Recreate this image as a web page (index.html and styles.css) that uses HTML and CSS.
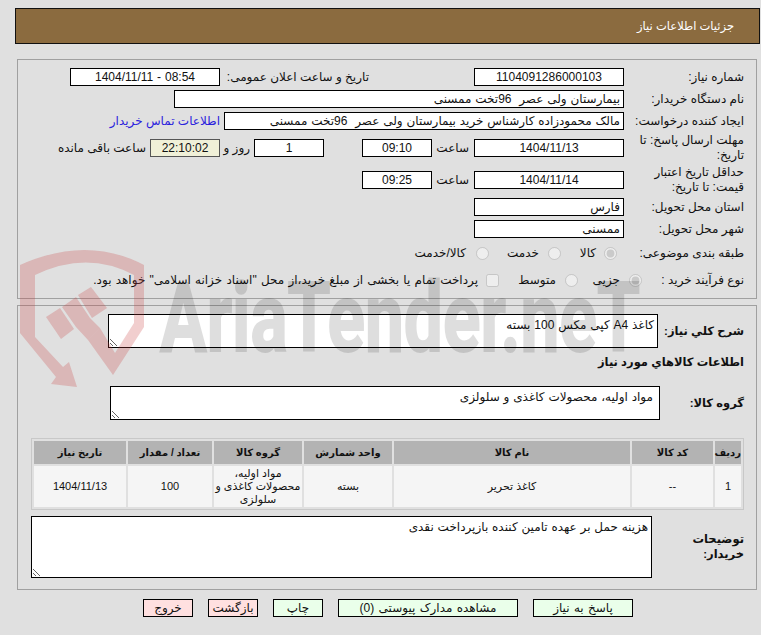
FILE: index.html
```html
<!DOCTYPE html>
<html lang="fa" dir="rtl">
<head>
<meta charset="utf-8">
<title>جزئیات اطلاعات نیاز</title>
<link rel="stylesheet" href="styles.css">
</head>
<body>
<header class="title"><span>جزئیات اطلاعات نیاز</span></header>

<section class="panel first">
  <div class="row">
    <label class="lbl">شماره نیاز:</label>
    <div class="box w150 c">1104091286000103</div>
    <label class="lbl-pub">تاریخ و ساعت اعلان عمومی:</label>
    <div class="box w150 c">08:54 - 1404/11/11</div>
  </div>
  <div class="row">
    <label class="lbl">نام دستگاه خریدار:</label>
    <div class="box w450">بیمارستان ولی عصر  96تخت ممسنی</div>
  </div>
  <div class="row">
    <label class="lbl">ایجاد کننده درخواست:</label>
    <div class="box w400">مالک محمودزاده کارشناس خرید بیمارستان ولی عصر  96تخت ممسنی</div>
    <a class="contact" href="#">اطلاعات تماس خریدار</a>
  </div>
  <div class="row tall">
    <label class="lbl">مهلت ارسال پاسخ: تا تاریخ:</label>
    <div class="box w150 c">1404/11/13</div>
    <span class="hour">ساعت</span>
    <div class="box w70 c">09:10</div>
    <div class="box w70 c days">1</div>
    <span class="and">روز و</span>
    <div class="box w70 c clock">22:10:02</div>
    <span class="left">ساعت باقی مانده</span>
  </div>
  <div class="row tall">
    <label class="lbl">حداقل تاریخ اعتبار قیمت: تا تاریخ:</label>
    <div class="box w150 c">1404/11/14</div>
    <span class="hour">ساعت</span>
    <div class="box w70 c">09:25</div>
  </div>
  <div class="row">
    <label class="lbl">استان محل تحویل:</label>
    <div class="box w150">فارس</div>
  </div>
  <div class="row">
    <label class="lbl">شهر محل تحویل:</label>
    <div class="box w150">ممسنی</div>
  </div>
  <div class="row r8">
    <label class="lbl">طبقه بندی موضوعی:</label>
    <input class="opt o1" type="radio" disabled checked><span class="t1">کالا</span>
    <input class="opt o2" type="radio" disabled><span class="t2">خدمت</span>
    <input class="opt o3" type="radio" disabled><span class="t5">کالا/خدمت</span>
  </div>
  <div class="row r9">
    <label class="lbl">نوع فرآیند خرید :</label>
    <input class="opt p1" type="radio" disabled checked><span class="t3">جزیی</span>
    <input class="opt p2" type="radio" disabled><span class="t4">متوسط</span>
    <input class="opt p3" type="checkbox" disabled><span class="t6">پرداخت تمام یا بخشی از مبلغ خرید،از محل "اسناد خزانه اسلامی" خواهد بود.</span>
  </div>
</section>

<section class="panel second">
  <div class="row area-row">
    <label class="blbl l86">شرح کلي نیاز:</label>
    <textarea class="area h34 w550" readonly>کاغذ A4 کپی مکس 100 بسته</textarea>
  </div>
  <h2 class="subhead">اطلاعات کالاهاي مورد نیاز</h2>
  <div class="row area-row group">
    <label class="blbl l84">گروه کالا:</label>
    <textarea class="area h34 w550 inset" readonly>مواد اولیه، محصولات کاغذی و سلولزی</textarea>
  </div>
  <table class="items">
    <colgroup>
      <col class="k1"><col class="k2"><col class="k3"><col class="k4"><col class="k5"><col class="k6"><col class="k7">
    </colgroup>
    <thead>
      <tr><th>ردیف</th><th>کد کالا</th><th>نام کالا</th><th>واحد شمارش</th><th>گروه کالا</th><th>تعداد / مقدار</th><th>تاریخ نیاز</th></tr>
    </thead>
    <tbody>
      <tr><td>1</td><td>--</td><td>کاغذ تحریر</td><td>بسته</td><td>مواد اولیه، محصولات کاغذی و سلولزی</td><td>100</td><td>1404/11/13</td></tr>
    </tbody>
  </table>
  <div class="row area-row notes">
    <label class="blbl l92">توضیحات خریدار:</label>
    <textarea class="area h62 w621" readonly>هزینه حمل بر عهده تامین کننده بازپرداخت نقدی</textarea>
  </div>
</section>

<nav class="actions">
  <button class="btn ok w100">پاسخ به نیاز</button>
  <button class="btn ok w180">مشاهده مدارک پیوستی (0)</button>
  <button class="btn ok w50">چاپ</button>
  <button class="btn no w50">بازگشت</button>
  <button class="btn no w50">خروج</button>
</nav>

<svg class="watermark" width="761" height="635" viewBox="0 0 761 635" aria-hidden="true">
  <path class="shield" fill-rule="evenodd" d="M20 265Q87 235 144 265V327L113 375L88 340L100 328L115 353L134 323V275Q87 250 35 275V337L63 367L69 362L77 387L51 384L56 377L20 333Z"/>
  <path class="shield" d="M46 317L60 308L74 329L61 339Z"/>
  <path class="shield" d="M62 307L76 297L90 318L100 328L88 340L76 327Z"/>
  <path class="shield" d="M78 295L91 287L107 308L92 318Z"/>
  <text class="wmtext" x="160" y="351" textLength="480" lengthAdjust="spacingAndGlyphs">AriaTender.neT</text>
</svg>
</body>
</html>
```
FILE: styles.css
```css
* { box-sizing: border-box; }
html, body { margin: 0; padding: 0; }
body {
  background: #e0e0e0;
  color: #111;
  font: 12px "Liberation Sans", "DejaVu Sans", sans-serif;
  padding: 8px 1px 0 0;
  position: relative;
  height: 635px;
  overflow: hidden;
}
.title {
  width: 745px;
  height: 36px;
  background: #8b6b3f;
  border: 1px solid #111;
  color: #fff;
  display: flex;
  align-items: center;
  padding-right: 25px;
  font-size: 11.5px;
}
.panel {
  width: 740px;
  margin-right: 3px;
  border: 1px solid #a0a0a0;
  padding: 8px 12px 0 0;
}
.first { height: 240px; margin-top: 15px; display: flex; flex-direction: column; gap: 4px; }
.second { height: 285px; margin-top: 6px; }
.row { display: flex; align-items: center; height: 18px; flex: none; }
.tall { height: 28px; }
.r8 { height: 22px; }
.r9 { height: 24px; }
.lbl { width: 120px; flex: none; line-height: 15px; }
.r9 .lbl { width: 100px; }
.lbl-pub { margin-right: 105px; width: 149px; flex: none; white-space: nowrap; }
.box {
  height: 18px;
  background: #fff;
  border: 1px solid #000;
  padding: 0 3px;
  line-height: 16px;
  white-space: pre;
  flex: none;
  overflow: hidden;
  word-spacing: .5px;
}
.c { text-align: center; }
.w150 { width: 150px; }
.w70 { width: 70px; }
.w450 { width: 450px; }
.w400 { width: 400px; }
.contact { color: #2a22dd; text-decoration: none; margin-right: 4px; white-space: nowrap; }
.hour { width: 37px; margin-right: 5px; flex: none; }
.days { margin-right: 38px; }
.and { width: 30px; margin-right: 4px; flex: none; }
.clock { background: #f0f0d8; border-color: #555; }
.left { margin-right: 4px; white-space: nowrap; }
.opt { margin: 0; flex: none; width: 13px; height: 13px; }
.o1 { margin-right: 7px; }
.t1 { margin-right: 8px; width: 24px; flex: none; }
.o2 { margin-right: 11px; }
.t2 { margin-right: 9px; width: 38px; flex: none; }
.o3 { margin-right: 12px; }
.t5 { margin-right: 10px; white-space: nowrap; }
.p1 { margin-right: 2px; }
.t3 { margin-right: 9px; width: 27px; flex: none; }
.p2 { margin-right: 15px; }
.t4 { margin-right: 9px; width: 37px; flex: none; }
.p3 { margin-right: 20px; }
.t6 { margin-right: 8px; white-space: nowrap; word-spacing: .9px; }
.area-row { height: auto; }
.blbl { font-weight: bold; font-size: 11.5px; flex: none; line-height: 15px; }
.l86 { width: 86px; }
.l84 { width: 84px; }
.l92 { width: 92px; }
.area {
  background: #fff;
  border: 1px solid #000;
  border-radius: 0;
  font: inherit;
  color: inherit;
  padding: 3px 3px 2px;
  margin: 0;
  display: block;
  outline: none;
  flex: none;
  word-spacing: .5px;
}
.inset { padding-right: 6px; }
.h34 { height: 34px; }
.h62 { height: 62px; }
.w550 { width: 550px; }
.w621 { width: 621px; }
.subhead { font-size: 11.5px; font-weight: bold; margin: 6px 0 0; height: 16px; line-height: 16px; }
.group { margin-top: 16px; }
.items {
  border: 1px solid #c8c8c8;
  border-spacing: 2px;
  border-collapse: separate;
  table-layout: fixed;
  width: 713px;
  margin-top: 18px;
  font-size: 11px;
}
.k1 { width: 26px; } .k2 { width: 81px; } .k3 { width: 236px; } .k4 { width: 88px; }
.k5 { width: 88px; } .k6 { width: 84px; } .k7 { width: 92px; }
.items th { background: #b3b3b3; height: 23px; padding: 0; font-size: 10px; font-weight: bold; color: #111; }
.items td { background: #f5f5f5; height: 41px; padding: 0; text-align: center; line-height: 13px; }
.notes { margin-top: 6px; }
.actions { display: flex; gap: 15px; margin-top: 9px; padding-right: 127px; }
.btn {
  height: 18px;
  border: 1px solid #000;
  font: inherit;
  color: inherit;
  padding: 0;
  border-radius: 0;
  flex: none;
  word-spacing: 1px;
}
.ok { background: #eaffea; }
.no { background: #ffe0e0; }
.w100 { width: 100px; }
.w180 { width: 180px; }
.w50 { width: 50px; }
.watermark { position: absolute; left: 0; top: 0; pointer-events: none; }
.shield { fill: rgba(200, 60, 60, .25); }
.wmtext {
  direction: ltr;
  font-family: Roboto, "Liberation Sans", sans-serif;
  font-weight: 700;
  font-size: 96px;
  fill: #000;
  stroke: #000;
  stroke-width: 2px;
  opacity: .125;
}
```
